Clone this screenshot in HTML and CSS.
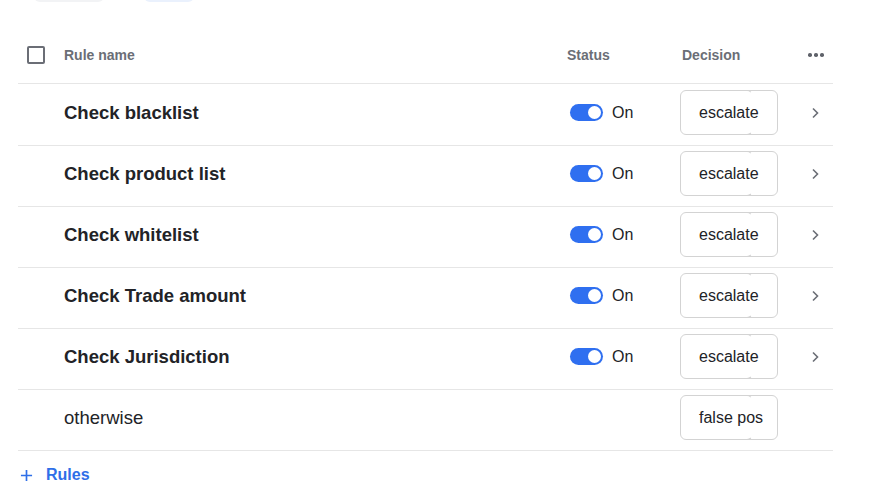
FILE: index.html
```html
<!DOCTYPE html>
<html lang="en">
<head>
  <meta charset="UTF-8">
  <title>Rules</title>
  <link rel="stylesheet" href="styles.css">
</head>
<body>

  <!-- Toolbar (scrolled partly out of view) -->
  <div class="toolbar">
    <span class="pill pill-grey"></span>
    <span class="pill pill-blue"></span>
  </div>

  <!-- Rules table -->
  <div class="rules">
    <div class="row head">
      <div class="cell"><span class="checkbox"></span></div>
      <div class="cell">Rule name</div>
      <div class="cell">Status</div>
      <div class="cell decision-head">Decision</div>
      <div class="cell more"><span></span><span></span><span></span></div>
    </div>

    <div class="row first">
      <div class="cell"></div>
      <div class="cell name">Check blacklist</div>
      <div class="cell"><span class="toggle"></span><span class="state">On</span></div>
      <div class="cell"><span class="decision">escalate</span></div>
      <div class="cell"><svg class="chevron" viewBox="0 0 8 12"><path d="M2 1.5 6.5 6 2 10.5"/></svg></div>
    </div>

    <div class="row">
      <div class="cell"></div>
      <div class="cell name">Check product list</div>
      <div class="cell"><span class="toggle"></span><span class="state">On</span></div>
      <div class="cell"><span class="decision">escalate</span></div>
      <div class="cell"><svg class="chevron" viewBox="0 0 8 12"><path d="M2 1.5 6.5 6 2 10.5"/></svg></div>
    </div>

    <div class="row">
      <div class="cell"></div>
      <div class="cell name">Check whitelist</div>
      <div class="cell"><span class="toggle"></span><span class="state">On</span></div>
      <div class="cell"><span class="decision">escalate</span></div>
      <div class="cell"><svg class="chevron" viewBox="0 0 8 12"><path d="M2 1.5 6.5 6 2 10.5"/></svg></div>
    </div>

    <div class="row">
      <div class="cell"></div>
      <div class="cell name">Check Trade amount</div>
      <div class="cell"><span class="toggle"></span><span class="state">On</span></div>
      <div class="cell"><span class="decision">escalate</span></div>
      <div class="cell"><svg class="chevron" viewBox="0 0 8 12"><path d="M2 1.5 6.5 6 2 10.5"/></svg></div>
    </div>

    <div class="row">
      <div class="cell"></div>
      <div class="cell name">Check Jurisdiction</div>
      <div class="cell"><span class="toggle"></span><span class="state">On</span></div>
      <div class="cell"><span class="decision">escalate</span></div>
      <div class="cell"><svg class="chevron" viewBox="0 0 8 12"><path d="M2 1.5 6.5 6 2 10.5"/></svg></div>
    </div>

    <div class="row">
      <div class="cell"></div>
      <div class="cell fallback">otherwise</div>
      <div class="cell"></div>
      <div class="cell"><span class="decision">false pos</span></div>
      <div class="cell"></div>
    </div>
  </div>

  <!-- Add rule -->
  <button class="add-rule">
    <svg viewBox="0 0 14 14"><path d="M7 1v12M1 7h12"/></svg>
    Rules
  </button>

</body>
</html>
```

FILE: styles.css
```css
* {
  margin: 0;
  padding: 0;
  box-sizing: border-box;
}
body {
  font-family: "Liberation Sans", Arial, sans-serif;
  color: #222327;
  background-color: #fff;
  overflow: hidden;
}
.toolbar {
  display: flex;
  height: 32px;
  margin-top: -30px;
  margin-bottom: 25px;
  padding-left: 34px;
  gap: 40px;
}
.pill {
  height: 32px;
  border-radius: 6px;
}
.pill-grey {
  width: 70px;
  background-color: #f2f3f5;
}
.pill-blue {
  width: 50px;
  background-color: #eaf1fd;
}
.rules {
  margin-left: 18px;
  width: 815px;
}
.row {
  display: grid;
  grid-template-columns: 46px 503px 113px 120px 33px;
  align-items: center;
  height: 61px;
  padding-bottom: 5px;
  border-bottom: 1px solid #e6e6e6;
}
.row.head {
  height: 57px;
  padding-bottom: 0;
  font-size: 14px;
  font-weight: bold;
  color: #6b6e76;
}
.row.first {
  height: 62px;
  padding-bottom: 4px;
}
.cell {
  display: flex;
  align-items: center;
}
.checkbox {
  width: 18px;
  height: 18px;
  margin-left: 9px;
  border: 2px solid #6b6e76;
  border-radius: 2px;
}
.decision-head {
  padding-left: 2px;
}
.more {
  gap: 2.5px;
  padding-left: 8px;
}
.more span {
  width: 3.5px;
  height: 3.5px;
  border-radius: 50%;
  background-color: #5f626a;
}
.name {
  font-size: 18.5px;
  font-weight: bold;
}
.fallback {
  font-size: 18.5px;
}
.toggle {
  position: relative;
  width: 33px;
  height: 17px;
  margin-left: 3px;
  border-radius: 9px;
  background-color: #2f6ff0;
}
.toggle::after {
  content: "";
  position: absolute;
  top: 2px;
  right: 2px;
  width: 13px;
  height: 13px;
  border-radius: 50%;
  background-color: #fff;
}
.state {
  margin-left: 9px;
  font-size: 16px;
}
.decision {
  position: relative;
  display: inline-flex;
  align-items: center;
  width: 98px;
  height: 45px;
  padding-left: 18px;
  font-size: 16px;
  border: 1px solid #d3d3d3;
  border-radius: 6px;
}
/* seam of the attached dropdown part */
.decision::after {
  content: "";
  position: absolute;
  top: -1px;
  bottom: -1px;
  left: 63px;
  width: 8px;
  border: 1px solid #d3d3d3;
  border-left: none;
  border-right-color: transparent;
  border-radius: 0 6px 6px 0;
}
.chevron {
  width: 8px;
  height: 12px;
  margin-left: 11px;
  fill: none;
  stroke: #6b6e76;
  stroke-width: 1.6;
}
.add-rule {
  display: flex;
  align-items: center;
  gap: 13px;
  margin: 15px 0 0 20px;
  background: none;
  border: none;
  font-family: inherit;
  font-size: 16px;
  font-weight: bold;
  color: #2f6fe8;
}
.add-rule svg {
  width: 13px;
  height: 13px;
  fill: none;
  stroke: #2f6fe8;
  stroke-width: 1.8;
}
```
